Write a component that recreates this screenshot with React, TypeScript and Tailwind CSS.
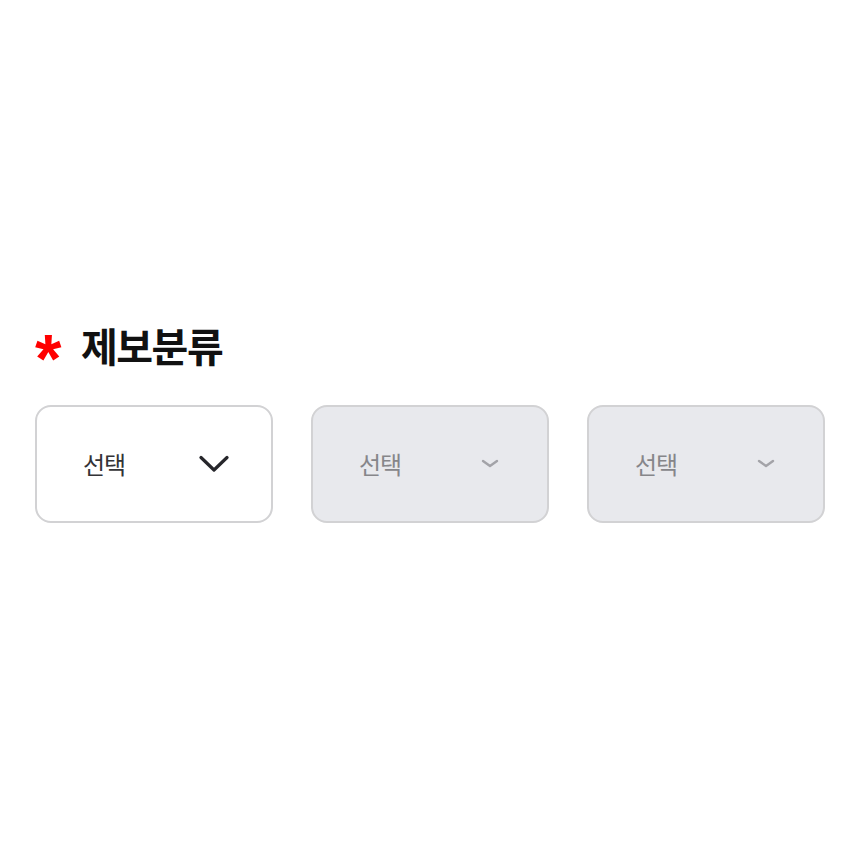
import React from "react";

function Chevron({ active }: { active: boolean }) {
  if (active) {
    return (
      <svg width="30" height="18" viewBox="0 0 30 18" fill="none">
        <path d="M2 2.5 L15 15 L28 2.5" stroke="#26262b" strokeWidth="3.2" strokeLinecap="round" strokeLinejoin="round" />
      </svg>
    );
  }
  return (
    <svg width="30" height="18" viewBox="0 0 30 18" fill="none">
      <path d="M8 6 L15 11 L22 6" stroke="#a3a3a8" strokeWidth="2.4" strokeLinecap="round" strokeLinejoin="round" />
    </svg>
  );
}

function SelectBox({ active }: { active: boolean }) {
  return (
    <div
      className={
        "flex h-[118px] w-[238px] items-center justify-between rounded-[16px] border-2 border-[#d2d2d4] pl-[46px] pr-[42px] " +
        (active ? "bg-white" : "bg-[#e8e9ed]")
      }
    >
      <span
        className={
          "font-['Noto_Sans_CJK_KR',sans-serif] text-[24px] tracking-[-1px] " +
          (active ? "text-[#333336]" : "text-[#86868a]")
        }
      >
        선택
      </span>
      <Chevron active={active} />
    </div>
  );
}

export default function App() {
  return (
    <div className="min-h-[860px] w-[860px] bg-white px-[35px] pt-[314px] font-['Noto_Sans_CJK_KR',sans-serif]">
      <div className="flex h-[62px] items-center">
        <span className="w-[30px] translate-y-[13px] font-['Liberation_Sans',sans-serif] text-[68px] font-bold leading-none text-[#ff0000]">
          *
        </span>
        <span className="ml-[16px] font-['Noto_Sans_CJK_KR',sans-serif] text-[40px] font-bold tracking-[-1.5px] text-[#111]">
          제보분류
        </span>
      </div>
      <div className="mt-[29px] flex gap-[38px]">
        <SelectBox active />
        <SelectBox active={false} />
        <SelectBox active={false} />
      </div>
    </div>
  );
}
